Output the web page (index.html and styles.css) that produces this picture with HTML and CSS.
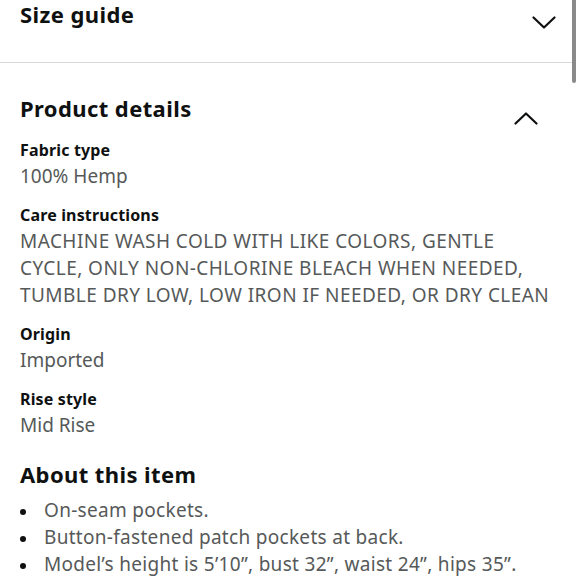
FILE: index.html
```html
<!DOCTYPE html>
<html lang="en">
<head>
<meta charset="utf-8">
<link rel="stylesheet" href="styles.css">
</head>
<body>
<div class="scrollbar"></div>
<section class="panel panel-closed">
  <div class="panel-head">
    <h2 class="heading">Size guide</h2>
    <svg class="chev chev-down" width="24" height="13" viewBox="0 0 24 13"><polyline points="1.5,1.5 12,11.5 22.5,1.5" fill="none" stroke="#0f1111" stroke-width="2.2" stroke-linecap="round" stroke-linejoin="round"/></svg>
  </div>
</section>
<section class="panel panel-open">
  <div class="panel-head">
    <h2 class="heading">Product details</h2>
    <svg class="chev chev-up" width="24" height="13" viewBox="0 0 24 13"><polyline points="1.5,11.5 12,1.5 22.5,11.5" fill="none" stroke="#0f1111" stroke-width="2.2" stroke-linecap="round" stroke-linejoin="round"/></svg>
  </div>
  <dl class="details">
    <div class="detail">
      <dt class="label">Fabric type</dt>
      <dd class="value">100% Hemp</dd>
    </div>
    <div class="detail">
      <dt class="label">Care instructions</dt>
      <dd class="value value-caps">MACHINE WASH COLD WITH LIKE COLORS, GENTLE CYCLE, ONLY NON-CHLORINE BLEACH WHEN NEEDED, TUMBLE DRY LOW, LOW IRON IF NEEDED, OR DRY CLEAN</dd>
    </div>
    <div class="detail">
      <dt class="label">Origin</dt>
      <dd class="value">Imported</dd>
    </div>
    <div class="detail">
      <dt class="label">Rise style</dt>
      <dd class="value">Mid Rise</dd>
    </div>
  </dl>
  <h2 class="heading about">About this item</h2>
  <ul class="bullets">
    <li>On-seam pockets.</li>
    <li>Button-fastened patch pockets at back.</li>
    <li>Model’s height is 5’10”, bust 32”, waist 24”, hips 35”.</li>
  </ul>
</section>
</body>
</html>
```
FILE: styles.css
```css
html, body {
  margin: 0;
  padding: 0;
  background: #ffffff;
}
body {
  font-family: "Noto Sans", "Open Sans", sans-serif;
  color: #0f1111;
  overflow: hidden;
  height: 580px;
}
.scrollbar {
  position: fixed;
  top: -4px;
  left: 572px;
  width: 3.5px;
  height: 87px;
  border-radius: 2px;
  background: #8a8a8a;
}
.panel {
  padding: 0 20px;
}
.panel-closed {
  height: 62px;
  border-bottom: 1px solid #d5d9d9;
  margin-right: 8px;
}
.panel-head {
  display: flex;
  align-items: flex-start;
  justify-content: space-between;
}
.heading {
  margin: 0;
  font-size: 22px;
  line-height: 28px;
  font-weight: 700;
  letter-spacing: 0.4px;
}
.chev {
  display: block;
  flex: none;
}
.chev-down {
  margin-top: 16px;
  margin-right: -4px;
}
.panel-open {
  padding-top: 31px;
  padding-right: 8px;
}
.chev-up {
  margin-top: 18px;
  margin-right: 34px;
}
.details {
  margin: 12px 0 0;
}
.detail {
  margin-bottom: 12px;
}
.label {
  font-size: 16px;
  line-height: 26px;
  font-weight: 700;
  letter-spacing: 0.15px;
}
.value {
  margin: 0;
  font-size: 19px;
  line-height: 27px;
  color: #565959;
}
.value-caps {
  letter-spacing: 0.45px;
  max-width: 536px;
}
.about {
  margin-top: 21px;
}
.bullets {
  list-style: none;
  margin: 9px 0 0;
  padding: 0;
  font-size: 19px;
  line-height: 27px;
  color: #565959;
  letter-spacing: 0.3px;
}
.bullets li {
  display: flex;
  align-items: center;
}
.bullets li::before {
  content: "";
  flex: none;
  width: 6px;
  height: 6px;
  border-radius: 50%;
  background: #0f1111;
  margin: 2px 18px 0 0;
}
```
